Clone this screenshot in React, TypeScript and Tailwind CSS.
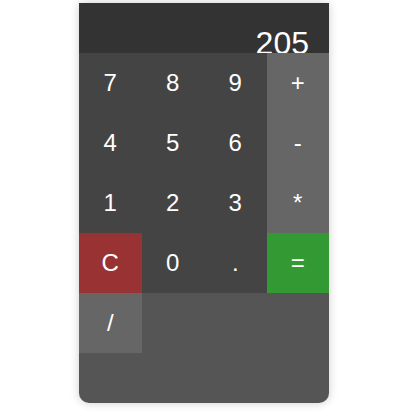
const keys: { label: string; cls: string }[] = [
  { label: "7", cls: "bg-[#444]" },
  { label: "8", cls: "bg-[#444]" },
  { label: "9", cls: "bg-[#444]" },
  { label: "+", cls: "bg-[#666]" },
  { label: "4", cls: "bg-[#444]" },
  { label: "5", cls: "bg-[#444]" },
  { label: "6", cls: "bg-[#444]" },
  { label: "-", cls: "bg-[#666]" },
  { label: "1", cls: "bg-[#444]" },
  { label: "2", cls: "bg-[#444]" },
  { label: "3", cls: "bg-[#444]" },
  { label: "*", cls: "bg-[#666]" },
  { label: "C", cls: "bg-[#993333]" },
  { label: "0", cls: "bg-[#444]" },
  { label: ".", cls: "bg-[#444]" },
  { label: "=", cls: "bg-[#339933]" },
  { label: "/", cls: "bg-[#666]" },
];

export default function App() {
  return (
    <div className="bg-white pt-[3px] pb-[10px] font-['Liberation_Sans',Arial,sans-serif]">
      <div className="ml-[79px] h-[400px] w-[250px] rounded-b-[10px] bg-[#555] shadow-[0_0_10px_rgba(0,0,0,0.2)]">
        <div className="flex h-[50px] justify-end bg-[#333] pt-[24px] pr-[20px] text-[32px] leading-none text-white">
          205
        </div>
        <div className="grid grid-cols-4">
          {keys.map((k) => (
            <button
              key={k.label}
              className={`flex h-[60px] items-center justify-center text-[24px] text-white ${k.cls}`}
            >
              {k.label}
            </button>
          ))}
        </div>
      </div>
    </div>
  );
}
